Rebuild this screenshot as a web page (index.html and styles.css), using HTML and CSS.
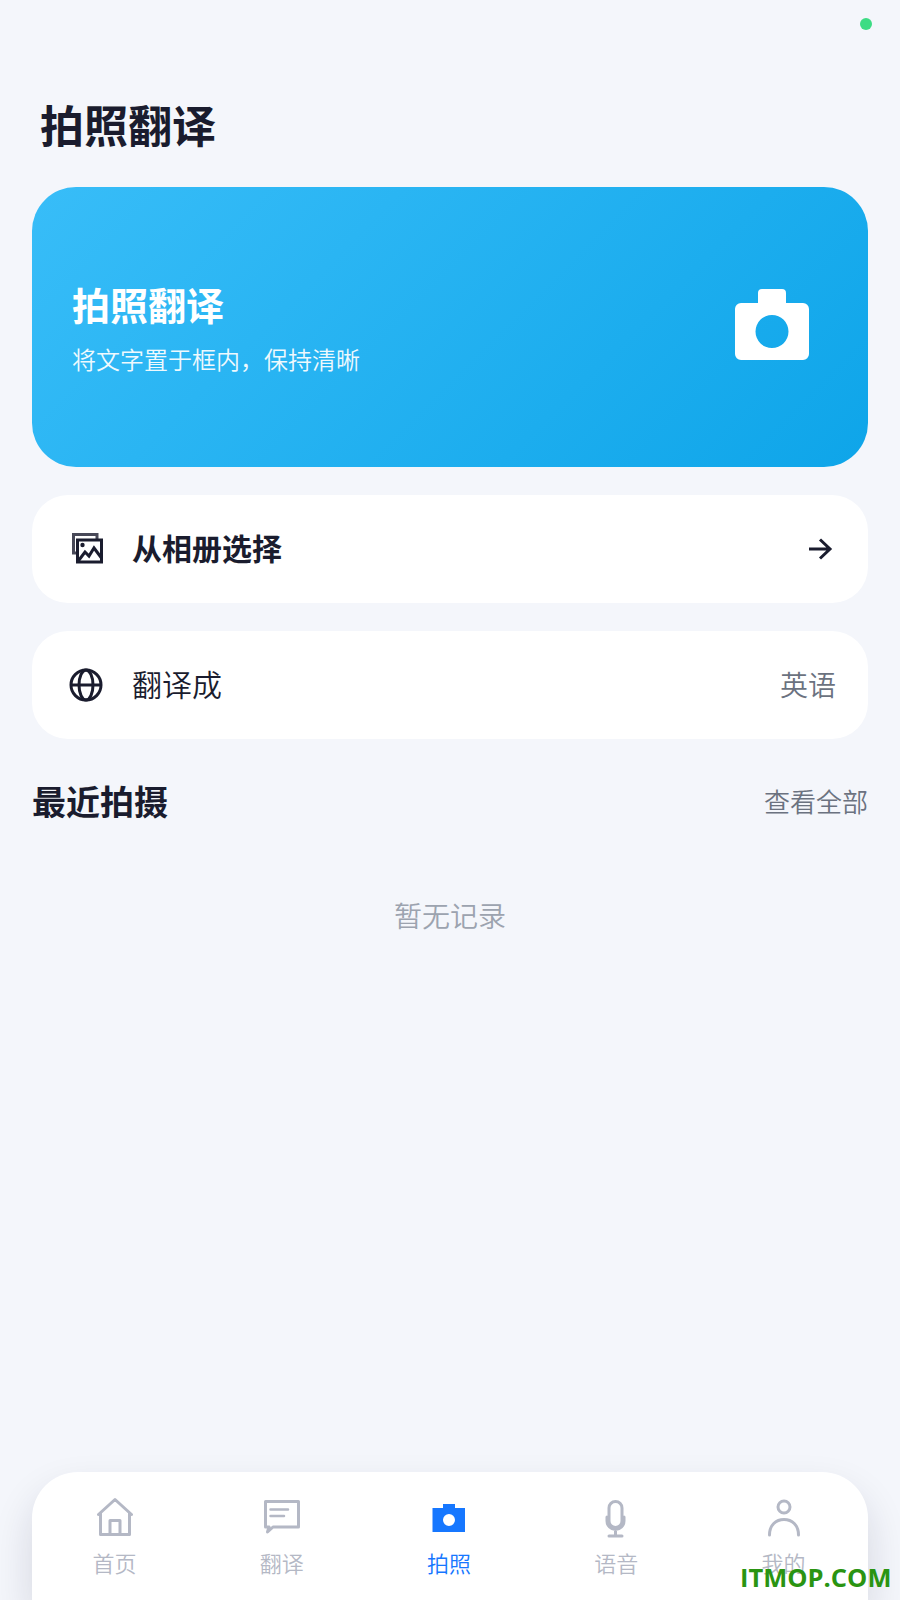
FILE: index.html
```html
<!DOCTYPE html>
<html lang="zh-CN">
<head>
<meta charset="utf-8">
<title>拍照翻译</title>
<link rel="stylesheet" href="styles.css">
</head>
<body>
<div class="page">
  <span class="status-dot"></span>
  <h1 class="title">拍照翻译</h1>
  <section class="hero">
    <div class="hero-text">
      <div class="hero-title">拍照翻译</div>
      <div class="hero-sub">将文字置于框内，保持清晰</div>
    </div>
    <svg class="hero-icon" viewBox="0 0 100 100" aria-hidden="true">
      <path fill-rule="evenodd" fill="#fff" d="M40 12h20a4 4 0 0 1 4 4v10h17a6 6 0 0 1 6 6v45a6 6 0 0 1-6 6H19a6 6 0 0 1-6-6V32a6 6 0 0 1 6-6h17V16a4 4 0 0 1 4-4zM50 38a16.500 16.500 0 1 0 0 33a16.500 16.500 0 0 0 0-33z"/>
    </svg>
  </section>
  <div class="row">
    <svg class="row-icon" viewBox="0 0 44 44" aria-hidden="true">
      <path class="stroke dim" d="M13 26H9.500V7.500H33V13"/>
      <rect class="stroke" x="13.500" y="13" width="24" height="22"/>
      <path class="stroke" d="M13.500 35L21 25l4 4 5-8 7.500 10"/>
      <circle cx="18.500" cy="18" r="2.200" fill="#1a1c2e"/>
    </svg>
    <span class="row-label strong">从相册选择</span>
    <svg class="row-icon" viewBox="0 0 44 44" aria-hidden="true">
      <path class="stroke" d="M17 22H38M28 12.500L38 22L28 31.500"/>
    </svg>
  </div>
  <div class="row">
    <svg class="row-icon" viewBox="0 0 44 44" aria-hidden="true">
      <circle class="stroke" cx="22" cy="22" r="15"/>
      <ellipse class="stroke" cx="22" cy="22" rx="7" ry="15"/>
      <path class="stroke" d="M7 22H37"/>
    </svg>
    <span class="row-label">翻译成</span>
    <span class="row-value">英语</span>
  </div>
  <div class="section-head">
    <h2 class="section-title">最近拍摄</h2>
    <span class="section-link">查看全部</span>
  </div>
  <p class="empty">暂无记录</p>
  <nav class="nav">
    <div class="nav-item">
      <svg class="nav-icon" viewBox="0 0 48 48" aria-hidden="true">
        <path class="nav-stroke" d="M6.500 20.500L23 5.500L39.500 20.500M8.500 19V40.500H37.500V19M18 40.500V26.500H28V40.500"/>
      </svg>
      <span class="nav-text">首页</span>
    </div>
    <div class="nav-item">
      <svg class="nav-icon" viewBox="0 0 48 48" aria-hidden="true">
        <path class="nav-stroke" d="M6.500 7.500H39.500V33H14L8.500 38L10 33H6.500Z"/>
        <path class="nav-stroke thin" d="M11.500 15.500H29M11.500 22H25"/>
      </svg>
      <span class="nav-text">翻译</span>
    </div>
    <div class="nav-item active">
      <svg class="nav-icon" viewBox="0 0 48 48" aria-hidden="true">
        <path fill-rule="evenodd" fill="#1677ff" d="M17 10H29V14H39V38H6.500V14H17ZM23 20a6 6 0 1 0 0 12a6 6 0 0 0 0-12z"/>
      </svg>
      <span class="nav-text">拍照</span>
    </div>
    <div class="nav-item">
      <svg class="nav-icon" viewBox="0 0 48 48" aria-hidden="true">
        <rect class="nav-stroke" x="16" y="7.500" width="13" height="26" rx="6.500"/>
        <path class="nav-stroke" d="M14 23V27A8.500 8.500 0 0 0 31 27V23M22.500 36V42M16 42H29"/>
      </svg>
      <span class="nav-text">语音</span>
    </div>
    <div class="nav-item">
      <svg class="nav-icon" viewBox="0 0 48 48" aria-hidden="true">
        <circle class="nav-stroke" cx="24" cy="13" r="6"/>
        <path class="nav-stroke" d="M9.500 41C9.500 31 16 25.500 24 25.500C32 25.500 38.500 31 38.500 41"/>
      </svg>
      <span class="nav-text">我的</span>
    </div>
  </nav>
  <div class="watermark">ITMOP.COM</div>
</div>
</body>
</html>
```

FILE: styles.css
```css
* { box-sizing: border-box; }
html, body { margin: 0; padding: 0; }
body {
  background: #f4f6fb;
  font-family: "Noto Sans CJK SC", "Noto Sans", sans-serif;
  color: #1a1c2e;
}
.page {
  position: relative;
  width: 900px;
  height: 1600px;
  overflow: hidden;
  padding: 0 32px;
  display: flex;
  flex-direction: column;
}
.status-dot {
  position: absolute;
  top: 18px;
  left: 860px;
  width: 12px;
  height: 12px;
  border-radius: 50%;
  background: #3ddc84;
}
.title {
  margin: 94px 0 0 8px;
  font-size: 44px;
  line-height: 60px;
  font-weight: 700;
}
.hero {
  margin-top: 33px;
  height: 280px;
  flex: none;
  border-radius: 44px;
  background: linear-gradient(135deg, #38bdf8, #0ea5e9);
  padding: 0 40px;
  display: flex;
  align-items: center;
  justify-content: space-between;
  color: #fff;
}
.hero-text { display: flex; flex-direction: column; }
.hero-title { font-size: 38px; line-height: 52px; font-weight: 700; }
.hero-sub { font-size: 24px; line-height: 34px; margin-top: 12px; opacity: .92; font-weight: 350; }
.hero-icon { width: 100px; height: 100px; margin-right: 6px; }
.row {
  margin-top: 28px;
  height: 108px;
  flex: none;
  border-radius: 36px;
  background: #fff;
  padding: 0 32px;
  display: flex;
  align-items: center;
  gap: 24px;
}
.row-icon { width: 44px; height: 44px; flex: none; }
.stroke { fill: none; stroke: #1a1c2e; stroke-width: 3; }
.dim { opacity: .8; }
.row-label { flex: 1; font-size: 30px; line-height: 40px; font-weight: 350; margin-bottom: 4px; }
.row-label.strong { font-weight: 700; }
.row-value { font-size: 28px; line-height: 40px; color: #6b7280; font-weight: 350; margin-bottom: 2px; }
.section-head {
  margin-top: 36px;
  display: flex;
  align-items: center;
  justify-content: space-between;
}
.section-title { margin: 0; font-size: 34px; line-height: 52px; font-weight: 700; }
.section-link { font-size: 26px; color: #6b7280; font-weight: 350; margin-bottom: 2px; }
.empty {
  margin: 66px 0 0;
  text-align: center;
  font-size: 28px;
  line-height: 44px;
  color: #9ca3af;
  font-weight: 350;
}
.nav {
  margin-top: auto;
  height: 128px;
  flex: none;
  border-radius: 46px 46px 0 0;
  background: #fff;
  box-shadow: 0 20px 40px rgba(20, 24, 60, .14);
  display: grid;
  grid-template-columns: repeat(5, 1fr);
  padding-top: 22px;
}
.nav-item {
  display: flex;
  flex-direction: column;
  align-items: center;
  font-size: 22px;
  line-height: 34px;
  color: #b4b8c5;
  font-weight: 350;
}
.nav-item.active { color: #1677ff; }
.nav-icon { width: 48px; height: 48px; margin-bottom: 3px; }
.nav-text { margin-right: 2px; }
.nav-stroke { fill: none; stroke: #b4b8c5; stroke-width: 3; stroke-linejoin: round; stroke-linecap: round; }
.nav-stroke.thin { stroke-width: 2.500; }
.watermark {
  position: absolute;
  left: 740px;
  top: 1559px;
  font-family: "Open Sans", sans-serif;
  font-size: 25.500px;
  line-height: 36px;
  font-weight: 700;
  color: #2a9412;
  white-space: nowrap;
}
```
